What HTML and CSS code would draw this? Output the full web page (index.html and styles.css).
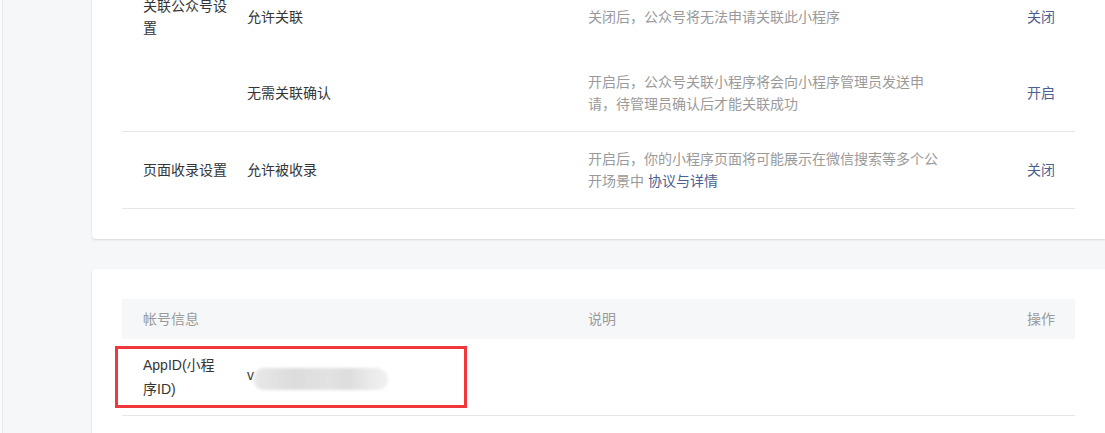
FILE: index.html
```html
<!DOCTYPE html>
<html lang="zh-CN">
<head>
<meta charset="utf-8">
<title>设置</title>
<link rel="stylesheet" href="styles.css">
</head>
<body>
<div class="layout">
  <aside class="side"></aside>
  <main class="main">
    <section class="card card-first">
      <div class="table">
        <div class="row row-nobd">
          <div class="cell c1">关联公众号设置</div>
          <div class="cell c2">允许关联</div>
          <div class="cell c3 desc">关闭后，公众号将无法申请关联此小程序</div>
          <div class="cell c4"><a class="link">关闭</a></div>
        </div>
        <div class="row">
          <div class="cell c1"></div>
          <div class="cell c2">无需关联确认</div>
          <div class="cell c3 desc">开启后，公众号关联小程序将会向小程序管理员发送申请，待管理员确认后才能关联成功</div>
          <div class="cell c4"><a class="link">开启</a></div>
        </div>
        <div class="row">
          <div class="cell c1">页面收录设置</div>
          <div class="cell c2">允许被收录</div>
          <div class="cell c3 desc">开启后，你的小程序页面将可能展示在微信搜索等多个公开场景中 <a class="link">协议与详情</a></div>
          <div class="cell c4"><a class="link">关闭</a></div>
        </div>
      </div>
    </section>
    <section class="card">
      <div class="table">
        <div class="row head">
          <div class="cell c12">帐号信息</div>
          <div class="cell c3">说明</div>
          <div class="cell c4">操作</div>
        </div>
        <div class="row row-mark">
          <div class="cell c1 latin">AppID(小程序ID)</div>
          <div class="cell c2 latin"><span class="vchar">v</span><span class="blurred"></span></div>
          <div class="cell c3"></div>
          <div class="cell c4"></div>
          <div class="mark"></div>
        </div>
      </div>
    </section>
  </main>
</div>
</body>
</html>
```

FILE: styles.css
```css
* { box-sizing: border-box; }
html, body { margin: 0; padding: 0; }
body {
  background: #f6f7f9;
  font-family: "Liberation Sans", "Noto Sans CJK SC", sans-serif;
  font-size: 14px;
  color: #353535;
  overflow: hidden;
  height: 433px;
}
.layout { display: flex; align-items: stretch; min-height: 100%; }
.side {
  width: 3px;
  flex: none;
  background: #fbfbfc;
  border-right: 1px solid #e6e8eb;
  min-height: 433px;
}
.main {
  flex: 1;
  padding-left: 89px;
  margin-top: -51px;
}
.card {
  background: #fff;
  border-radius: 4px 0 0 4px;
  box-shadow: 0 1px 2px rgba(150, 150, 150, 0.3);
  padding: 30px;
  margin-bottom: 30px;
}
.table { display: flex; flex-direction: column; }
.row {
  position: relative;
  display: grid;
  grid-template-columns: 105px 341px 376px 1fr;
  align-items: center;
  min-height: 77px;
  padding: 16px 0;
  line-height: 22px;
  border-bottom: 1px solid #e7e7eb;
}
.row-nobd { border-bottom: none; min-height: 76px; }
.cell { min-width: 0; }
.c1 { padding-left: 21px; }
.c2 { padding-left: 20px; }
.c3 { padding-left: 20px; }
.c4 { padding-right: 20px; text-align: right; }
.c12 { grid-column: 1 / span 2; padding-left: 21px; }
.desc { color: #9a9a9a; }
a.link { color: #4a5f93; text-decoration: none; cursor: pointer; }
.head {
  background: #f6f7f9;
  min-height: 40px;
  padding: 0;
  color: #9a9a9a;
  border-bottom: none;
}
.latin { color: #353535; }
.row-mark { padding: 14px 0; }
.row-mark .c1 { line-height: 24px; }
.vchar { display: inline-block; vertical-align: middle; margin-top: -4px; }
.blurred {
  display: inline-block;
  vertical-align: middle;
  width: 134px;
  height: 22px;
  margin-left: 0;
  margin-top: 3px;
  border-radius: 11px 14px 12px 11px;
  background: linear-gradient(90deg, #e8e8e8 0%, #dcdcdc 30%, #e2e2e2 55%, #dddddd 70%, #ececec 90%, #f0f0f0 100%);
  filter: blur(1.5px);
}
.mark {
  position: absolute;
  left: -7px;
  top: 7px;
  width: 352px;
  height: 62px;
  border: 3px solid #f0383c;
}
```
